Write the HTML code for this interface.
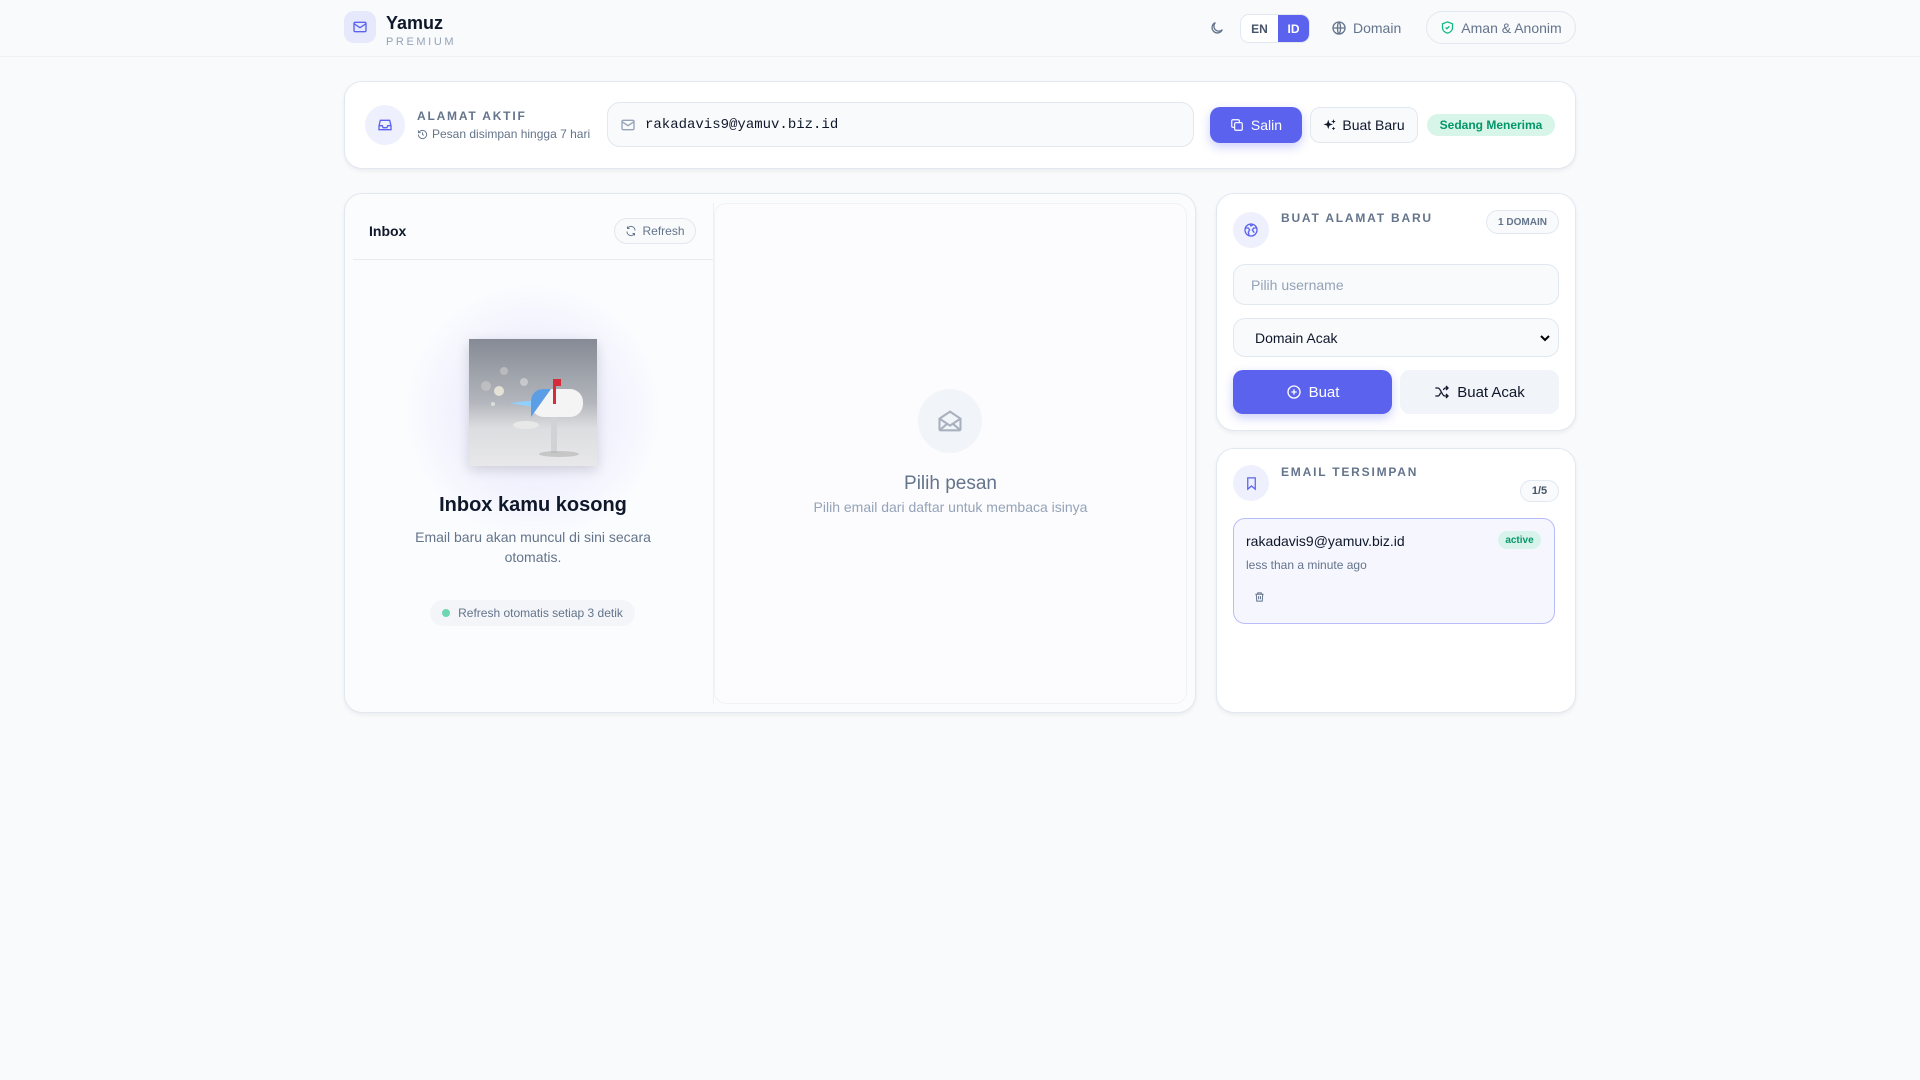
<!DOCTYPE html>
<html><head><meta charset="utf-8"><style>
*{box-sizing:border-box;margin:0;padding:0}
body{width:1920px;height:1080px;background:#f8fafc;font-family:"Liberation Sans",sans-serif;color:#0f172a;position:relative;overflow:hidden}
.a{position:absolute}
.card{position:absolute;background:#fff;border:1px solid #e2e8f0;border-radius:18px;box-shadow:0 2px 4px rgba(15,23,42,.06)}
.ic{position:absolute;border-radius:50%;background:#eef0fd;display:flex;align-items:center;justify-content:center}
.lbl{font-size:12px;font-weight:bold;letter-spacing:1.8px;color:#64748b}
.pill{position:absolute;border:1px solid #e2e8f0;border-radius:999px;display:flex;align-items:center;justify-content:center}
.btn{position:absolute;border-radius:10px;display:flex;align-items:center;justify-content:center;gap:7px;font-size:15px}
svg{display:block}
</style></head><body>
<div class="a" style="left:0;top:0;width:1920px;height:57px;border-bottom:1px solid #eef0f4;background:#f8fafc"></div>
<div class="a" style="left:344px;top:11px;width:32px;height:32px;border-radius:10px;background:#e6e8fb;display:flex;align-items:center;justify-content:center">
<svg width="16" height="16" viewBox="0 0 24 24" fill="none" stroke="#5b63ee" stroke-width="2"><rect x="3" y="5" width="18" height="14" rx="2"/><path d="M3 7l9 6 9-6"/></svg></div>
<div class="a" style="left:386px;top:13px;font-size:18px;font-weight:bold">Yamuz</div>
<div class="a" style="left:386px;top:36px;font-size:11px;letter-spacing:2.6px;color:#94a3b8">PREMIUM</div>
<div class="a" style="left:1209px;top:20px"><svg width="16" height="16" viewBox="0 0 24 24" fill="none" stroke="#64748b" stroke-width="2"><path d="M20 14.5A8 8 0 1 1 9.5 4a6.5 6.5 0 0 0 10.5 10.5z"/></svg></div>
<div class="a" style="left:1240px;top:14px;width:70px;height:29px;border:1px solid #e2e8f0;border-radius:9px;overflow:hidden;display:flex;font-size:12px;font-weight:bold">
<div style="width:37px;display:flex;align-items:center;justify-content:center;color:#475569;background:#fff">EN</div>
<div style="flex:1;display:flex;align-items:center;justify-content:center;color:#fff;background:#5b63ee">ID</div></div>
<div class="a" style="left:1331px;top:20px;display:flex;gap:6px;align-items:center;font-size:14px;color:#64748b"><svg width="16" height="16" viewBox="0 0 24 24" fill="none" stroke="#64748b" stroke-width="2"><circle cx="12" cy="12" r="9"/><path d="M3 12h18M12 3c3 3 3 15 0 18M12 3c-3 3-3 15 0 18"/></svg>Domain</div>
<div class="pill" style="left:1426px;top:11px;width:150px;height:33px;background:#f8fafc;gap:6px;font-size:14px;color:#64748b"><svg width="15" height="15" viewBox="0 0 24 24" fill="none" stroke="#10b981" stroke-width="2"><path d="M12 3l8 3v6c0 5-4 8-8 9-4-1-8-4-8-9V6z"/><path d="M9 12l2 2 4-4"/></svg>Aman &amp; Anonim</div>

<div class="card" style="left:344px;top:81px;width:1232px;height:88px"></div>
<div class="ic" style="left:365px;top:105px;width:40px;height:40px"><svg width="16" height="16" viewBox="0 0 24 24" fill="none" stroke="#5b63ee" stroke-width="2"><path d="M3 13h5l1 3h6l1-3h5"/><path d="M5 5h14l2 8v6H3v-6z"/></svg></div>
<div class="a lbl" style="left:417px;top:109px">ALAMAT AKTIF</div>
<div class="a" style="left:417px;top:127px;font-size:12px;color:#64748b;display:flex;gap:4px;align-items:center"><svg width="11" height="11" viewBox="0 0 24 24" fill="none" stroke="#64748b" stroke-width="2"><path d="M3 12a9 9 0 1 0 3-6.7L3 8"/><path d="M3 3v5h5M12 7v5l3 2"/></svg>Pesan disimpan hingga 7 hari</div>
<div class="a" style="left:607px;top:102px;width:587px;height:45px;border:1px solid #e2e8f0;border-radius:13px;background:#f8fafc;display:flex;align-items:center;padding-left:12px;gap:9px;font-family:'Liberation Mono',monospace;font-size:14px;padding-top:1px"><svg width="16" height="16" viewBox="0 0 24 24" fill="none" stroke="#94a3b8" stroke-width="2"><rect x="3" y="5" width="18" height="14" rx="2"/><path d="M3 7l9 6 9-6"/></svg>rakadavis9@yamuv.biz.id</div>
<div class="btn" style="left:1210px;top:107px;width:92px;height:36px;background:#5b63ee;color:#fff;box-shadow:0 4px 10px rgba(91,99,238,.3);font-size:14px"><svg width="14" height="14" viewBox="0 0 24 24" fill="none" stroke="#fff" stroke-width="2"><rect x="8" y="8" width="13" height="13" rx="2"/><path d="M16 8V5a2 2 0 0 0-2-2H5a2 2 0 0 0-2 2v9a2 2 0 0 0 2 2h3"/></svg>Salin</div>
<div class="btn" style="left:1310px;top:107px;width:108px;height:36px;background:#f8fafc;border:1px solid #e2e8f0;color:#0f172a;gap:5px;font-size:14px"><svg width="14" height="14" viewBox="0 0 24 24" fill="#0f172a"><path d="M9 3l2 6 6 2-6 2-2 6-2-6-6-2 6-2zM18 2l1 3 3 1-3 1-1 3-1-3-3-1 3-1zM18 15l1 2 2 1-2 1-1 2-1-2-2-1 2-1z"/></svg>Buat Baru</div>
<div class="a" style="left:1427px;top:114px;width:128px;height:22px;border-radius:11px;background:#d8f5e9;color:#059669;font-size:12px;font-weight:bold;display:flex;align-items:center;justify-content:center">Sedang Menerima</div>

<div class="card" style="left:344px;top:193px;width:852px;height:520px;background:#fbfcfe"></div>
<div class="a" style="left:369px;top:223px;font-size:14px;font-weight:bold">Inbox</div>
<div class="pill" style="left:614px;top:218px;width:82px;height:26px;background:#f8fafc;gap:5px;font-size:12px;color:#64748b"><svg width="12" height="12" viewBox="0 0 24 24" fill="none" stroke="#64748b" stroke-width="2"><path d="M20 11A8 8 0 0 0 5 7M4 13a8 8 0 0 0 15 4"/><path d="M5 3v4h4M19 21v-4h-4"/></svg>Refresh</div>
<div class="a" style="left:353px;top:259px;width:360px;height:1px;background:#e8ecf1"></div>
<div class="a" style="left:713px;top:203px;width:1px;height:501px;background:#eef0f4"></div>
<div class="a" style="left:403px;top:282px;width:260px;height:260px;border-radius:50%;background:radial-gradient(circle,rgba(99,102,241,.12) 0%,rgba(99,102,241,.06) 45%,rgba(255,255,255,0) 70%)"></div>
<div class="a" style="left:469px;top:339px;width:128px;height:127px;background:linear-gradient(#858a94,#b3b6bc 50%,#dcdde0 70%,#e8e8ea);box-shadow:0 4px 12px rgba(0,0,0,.15);overflow:hidden">
<svg width="128" height="127" viewBox="0 0 128 127"><circle cx="30" cy="52" r="5" fill="#f2efe0" opacity=".8"/><circle cx="17" cy="47" r="5" fill="#ccc" opacity=".6"/><circle cx="35" cy="32" r="4" fill="#ccc" opacity=".6"/><circle cx="55" cy="43" r="4" fill="#ddd" opacity=".6"/><circle cx="24" cy="65" r="2" fill="#ddd"/>
<path d="M40 64l30-3 0 8z" fill="#8fd0ff"/><rect x="62" y="50" width="52" height="28" rx="13" fill="#f4f4f4"/><path d="M62 78V62a12 12 0 0 1 12-12h8" fill="#5b9ee6"/><rect x="82" y="78" width="6" height="36" fill="#d0d2d6"/><rect x="84" y="40" width="3" height="25" fill="#d62b3a"/><rect x="84" y="40" width="8" height="7" fill="#d62b3a"/><ellipse cx="57" cy="86" rx="13" ry="4" fill="#e8e8e8"/><ellipse cx="90" cy="115" rx="20" ry="3" fill="#999" opacity=".4"/></svg></div>
<div class="a" style="left:353px;top:494px;width:360px;text-align:center;font-size:20px;font-weight:bold">Inbox kamu kosong</div>
<div class="a" style="left:403px;top:527px;width:260px;text-align:center;font-size:14px;line-height:20px;color:#64748b">Email baru akan muncul di sini secara otomatis.</div>
<div class="a" style="left:430px;top:600px;width:205px;height:26px;border-radius:13px;background:#f3f5f9;display:flex;align-items:center;justify-content:center;gap:8px;font-size:12px;color:#64748b"><span style="width:8px;height:8px;border-radius:50%;background:#6ed6b0;display:inline-block"></span>Refresh otomatis setiap 3 detik</div>
<div class="a" style="left:714px;top:203px;width:473px;height:501px;border:1px solid #f0f2f6;border-radius:12px;background:#fcfcfe"></div>
<div class="a" style="left:918px;top:389px;width:64px;height:64px;border-radius:50%;background:#f1f4f8;display:flex;align-items:center;justify-content:center"><svg width="28" height="28" viewBox="0 0 24 24" fill="none" stroke="#a9b1be" stroke-width="1.8"><path d="M3 10l9-6 9 6v9a1 1 0 0 1-1 1H4a1 1 0 0 1-1-1z"/><path d="M3 10l9 6 9-6M3 20l7-6M21 20l-7-6"/></svg></div>
<div class="a" style="left:714px;top:473px;width:473px;text-align:center;font-size:19px;color:#64748b">Pilih pesan</div>
<div class="a" style="left:714px;top:499px;width:473px;text-align:center;font-size:14px;color:#94a3b8">Pilih email dari daftar untuk membaca isinya</div>

<div class="card" style="left:1216px;top:193px;width:360px;height:238px"></div>
<div class="ic" style="left:1233px;top:212px;width:36px;height:36px"><svg width="16" height="16" viewBox="0 0 24 24" fill="none" stroke="#5b63ee" stroke-width="2"><circle cx="12" cy="12" r="9"/><path d="M4 9h4l2 3-2 3 1 5M20 9h-4l-2 3 3 4M10 3l2 3 3-2"/></svg></div>
<div class="a lbl" style="left:1281px;top:211px">BUAT ALAMAT BARU</div>
<div class="pill" style="left:1486px;top:210px;width:73px;height:24px;background:#f8fafc;font-size:10px;font-weight:bold;color:#64748b">1 DOMAIN</div>
<div class="a" style="left:1233px;top:264px;width:326px;height:41px;border:1px solid #e2e8f0;border-radius:12px;background:#f8fafc;padding-left:17px;display:flex;align-items:center;font-size:14px;color:#94a3b8">Pilih username</div>
<div class="a" style="left:1233px;top:318px;width:326px;height:39px;border:1px solid #e2e8f0;border-radius:12px;background:#f8fafc;padding-left:21px;display:flex;align-items:center;font-size:14px;color:#0f172a">Domain Acak<svg style="position:absolute;right:8px;top:15px" width="10" height="8" viewBox="0 0 10 8"><path d="M1 2l4 4 4-4" fill="none" stroke="#000" stroke-width="2"/></svg></div>
<div class="btn" style="left:1233px;top:370px;width:159px;height:44px;background:#5b63ee;color:#fff;box-shadow:0 4px 10px rgba(91,99,238,.3)"><svg width="16" height="16" viewBox="0 0 24 24" fill="none" stroke="#fff" stroke-width="2"><circle cx="12" cy="12" r="9"/><path d="M12 8v8M8 12h8"/></svg>Buat</div>
<div class="btn" style="left:1400px;top:370px;width:159px;height:44px;background:#f1f4f8;color:#0f172a"><svg width="16" height="16" viewBox="0 0 24 24" fill="none" stroke="#0f172a" stroke-width="2"><path d="M2 6h4c4 0 6 12 10 12h5M2 18h4c2 0 3-3 4-5M14 9c1-2 2-3 3-3h4M18 3l3 3-3 3M18 15l3 3-3 3"/></svg>Buat Acak</div>

<div class="card" style="left:1216px;top:448px;width:360px;height:265px"></div>
<div class="ic" style="left:1233px;top:465px;width:36px;height:36px"><svg width="15" height="15" viewBox="0 0 24 24" fill="none" stroke="#5b63ee" stroke-width="2"><path d="M6 3h12v18l-6-5-6 5z"/></svg></div>
<div class="a lbl" style="left:1281px;top:465px">EMAIL TERSIMPAN</div>
<div class="pill" style="left:1520px;top:480px;width:39px;height:22px;background:#f8fafc;font-size:11px;font-weight:bold;color:#475569">1/5</div>
<div class="a" style="left:1233px;top:518px;width:322px;height:106px;border:1px solid #b9bdf7;border-radius:12px;background:#f5f6fe"></div>
<div class="a" style="left:1246px;top:533px;font-size:14px">rakadavis9@yamuv.biz.id</div>
<div class="a" style="left:1498px;top:531px;width:43px;height:18px;border-radius:9px;background:#d8f3eb;color:#059669;font-size:10px;font-weight:bold;display:flex;align-items:center;justify-content:center">active</div>
<div class="a" style="left:1246px;top:558px;font-size:12px;color:#64748b">less than a minute ago</div>
<div class="a" style="left:1254px;top:591px"><svg width="11" height="12" viewBox="0 0 24 24" fill="none" stroke="#64748b" stroke-width="2.2"><path d="M3 6h18M8 6V3h8v3M5 6l1 15h12l1-15M10 10v7M14 10v7"/></svg></div>
</body></html>
